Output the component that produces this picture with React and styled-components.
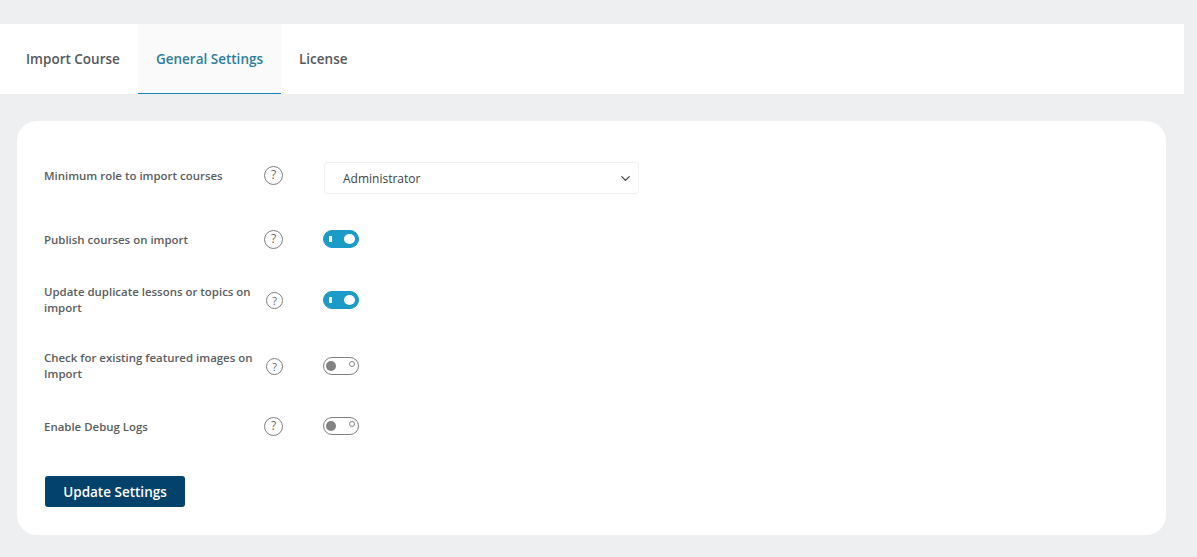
import React from "react";
import styled, { createGlobalStyle } from "styled-components";
import { ChevronDown } from "lucide-react";

const Global = createGlobalStyle`
    html, body {
        margin: 0;
        background: #eeeff1;
    }
    body {
        font-family: "Open Sans", "Noto Sans", "Liberation Sans", sans-serif;
        height: 557px;
        overflow: hidden;
    }
`;

const Page = styled.div`
    padding-top: 24px;
`;

const TabBar = styled.nav`
    display: flex;
    width: 1184px;
    height: 70px;
    padding-left: 8px;
    box-sizing: border-box;
    background: #fff;
`;

const Tab = styled.div`
    display: flex;
    align-items: center;
    padding: 0 18px 1px;
    font-size: 13.5px;
    font-weight: 600;
    color: ${(props) => (props.$active ? "#2f7d9b" : "#54585c")};
    background: ${(props) => (props.$active ? "#fafafa" : "transparent")};
    box-shadow: ${(props) => (props.$active ? "inset 0 -1px 0 #1f86b5" : "none")};
`;

const Card = styled.section`
    width: 1149px;
    height: 414px;
    margin: 27px 0 0 17px;
    padding: 23px 27px 0;
    box-sizing: border-box;
    background: #fff;
    border-radius: 20px;
`;

const Row = styled.div`
    display: flex;
    align-items: center;
    height: ${(props) => props.$height}px;
`;

const Label = styled.div`
    width: 220px;
    flex: none;
    padding-top: ${(props) => (props.$lowered ? 1 : 0)}px;
    font-size: 11.45px;
    line-height: 16px;
    font-weight: 600;
    color: #5a5d60;
`;

const HelpCell = styled.div`
    display: flex;
    justify-content: ${(props) => (props.$tight ? "flex-end" : "flex-start")};
    width: ${(props) => (props.$tight ? 19 : 59)}px;
    margin-right: ${(props) => (props.$tight ? 40 : 0)}px;
    margin-top: ${(props) => (props.$raised ? -2 : 0)}px;
    flex: none;
`;

const Help = styled.span`
    display: flex;
    align-items: center;
    justify-content: center;
    width: ${(props) => (props.$tight ? 17 : 19)}px;
    height: ${(props) => (props.$tight ? 17 : 19)}px;
    box-sizing: border-box;
    border: 1px solid #808080;
    border-radius: 50%;
    font-size: ${(props) => (props.$tight ? 11 : 12)}px;
    line-height: 1;
    color: #666;
`;

const Select = styled.div`
    display: flex;
    align-items: center;
    justify-content: space-between;
    width: 315px;
    height: 32px;
    margin: 4px 0 0 1px;
    padding: 0 5px 0 18px;
    box-sizing: border-box;
    border: 1px solid #f0f1f2;
    border-radius: 3px;
    font-size: 12px;
    color: #3c4146;
`;

const Toggle = styled.span`
    position: relative;
    display: block;
    width: 36px;
    height: 18px;
    box-sizing: border-box;
    border-radius: 9px;
    border: 1px solid ${(props) => (props.$on ? "#1c9ac8" : "#808080")};
    background: ${(props) => (props.$on ? "#1c9ac8" : "#fff")};
`;

const Knob = styled.span`
    position: absolute;
    top: 3px;
    left: ${(props) => (props.$on ? "20px" : "2px")};
    width: ${(props) => (props.$on ? 11 : 10)}px;
    height: 10px;
    border-radius: 50%;
    background: ${(props) => (props.$on ? "#fff" : "#828282")};
`;

const OnMark = styled.span`
    position: absolute;
    top: 5px;
    left: 5px;
    width: 3px;
    height: 6px;
    background: #fff;
`;

const OffMark = styled.span`
    position: absolute;
    top: 3px;
    right: 3px;
    width: 6px;
    height: 6px;
    box-sizing: border-box;
    border: 1px solid #888;
    border-radius: 50%;
`;

const Button = styled.button`
    display: block;
    width: 140px;
    height: 31px;
    margin: 26px 0 0 1px;
    padding: 0;
    border: 0;
    border-radius: 3px;
    background: #03426b;
    color: #fff;
    font-family: inherit;
    font-size: 13.5px;
    font-weight: 600;
`;

const Switch = ({ on }) => (
    <Toggle $on={on}>
        {on ? <OnMark /> : <OffMark />}
        <Knob $on={on} />
    </Toggle>
);

const settings = [
    { label: "Publish courses on import", on: true, height: 62 },
    { label: "Update duplicate lessons or topics on import", on: true, height: 60, tight: true },
    { label: "Check for existing featured images on Import", on: false, height: 72, tight: true },
    { label: "Enable Debug Logs", on: false, height: 48 },
];

const App = () => (
    <Page>
        <Global />
        <TabBar>
            <Tab>Import Course</Tab>
            <Tab $active>General Settings</Tab>
            <Tab>License</Tab>
        </TabBar>
        <Card>
            <Row $height={64}>
                <Label>Minimum role to import courses</Label>
                <HelpCell $raised><Help>?</Help></HelpCell>
                <Select>
                    Administrator
                    <ChevronDown size={15} color="#444" />
                </Select>
            </Row>
            {settings.map((item) => (
                <Row key={item.label} $height={item.height}>
                    <Label $lowered={!item.tight}>{item.label}</Label>
                    <HelpCell $tight={item.tight}><Help $tight={item.tight}>?</Help></HelpCell>
                    <Switch on={item.on} />
                </Row>
            ))}
            <Button>Update Settings</Button>
        </Card>
    </Page>
);

export default App;
